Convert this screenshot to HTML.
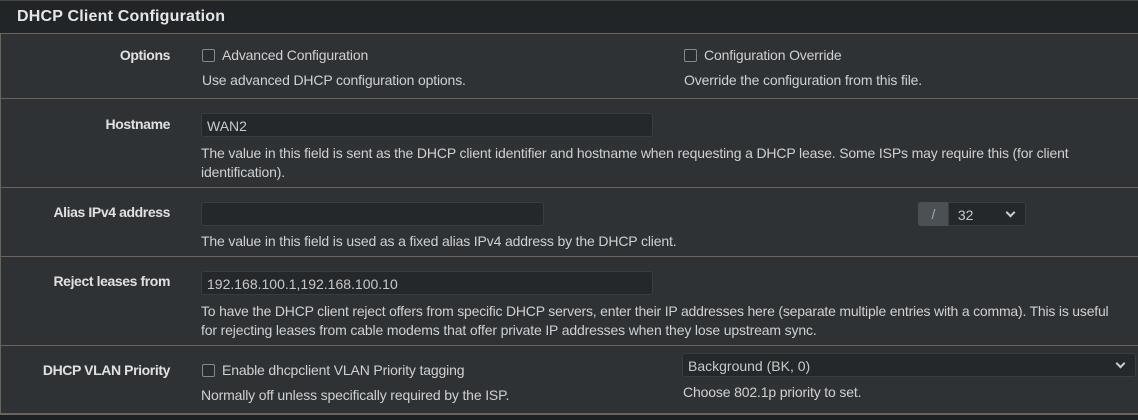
<!DOCTYPE html><html><head><style>
body{margin:0;width:1138px;height:420px;background:#1e2124;font-family:"Liberation Sans",sans-serif;font-size:14px;color:#d0d0d0;overflow:hidden;position:relative}
.p{position:absolute;left:0;top:0;width:1138px;height:414px;background:#2f3235;border-left:1px solid #6b6359}
.hd{position:absolute;left:0;top:0;width:1138px;height:32px;background:#222528;border-bottom:1px solid #6b6359;border-top:1px solid #4a463f}
.hd span{position:absolute;left:17px;top:7px;font-size:16px;font-weight:bold;color:#e6e6e6;letter-spacing:.2px}
.ln{position:absolute;left:0;width:1138px;height:1px;background:#6b6359}
.t{position:absolute;white-space:nowrap;letter-spacing:-0.15px}
.l{position:absolute;right:968px;font-weight:bold;color:#e0e0e0;white-space:nowrap;letter-spacing:-0.4px}
.in{position:absolute;background:#25282b;border:1px solid #3a3d40;border-radius:3px;box-sizing:border-box;color:#c8c8c8;padding:4px 5px}
.cb{position:absolute;width:11px;height:11px;border:1px solid #888;border-radius:2px;background:#2a2d30}
.ch{position:absolute;right:11px;top:6px;width:5px;height:5px;border-right:2px solid #ccc;border-bottom:2px solid #ccc;transform:rotate(45deg)}
</style></head><body>
<div class="p"></div>
<div class="hd"><span>DHCP Client Configuration</span></div>
<div class="ln" style="top:98px"></div>
<div class="ln" style="top:187px"></div>
<div class="ln" style="top:256px"></div>
<div class="ln" style="top:345px"></div>
<div class="ln" style="top:413px;height:2px"></div>

<div class="l" style="top:47px">Options</div>
<div class="cb" style="left:202px;top:49px"></div><div class="t" style="left:222px;top:47px">Advanced Configuration</div>
<div class="t" style="left:202px;top:72px">Use advanced DHCP configuration options.</div>
<div class="cb" style="left:684px;top:49px"></div><div class="t" style="left:704px;top:47px">Configuration Override</div>
<div class="t" style="left:684px;top:72px">Override the configuration from this file.</div>

<div class="l" style="top:116px">Hostname</div>
<div class="in" style="left:201px;top:113px;width:452px;height:24px">WAN2</div>
<div class="t" style="left:201px;top:145px">The value in this field is sent as the DHCP client identifier and hostname when requesting a DHCP lease. Some ISPs may require this (for client</div>
<div class="t" style="left:201px;top:164px">identification).</div>

<div class="l" style="top:204px">Alias IPv4 address</div>
<div class="in" style="left:201px;top:202px;width:343px;height:24px"></div>
<div style="position:absolute;left:918px;top:202px;width:31px;height:24px;background:#4b5054;color:#aaa;text-align:center;line-height:24px;border-radius:3px 0 0 3px">/</div>
<div class="in" style="left:948px;top:202px;width:78px;height:24px;border-radius:0 3px 3px 0">&nbsp;32<div class="ch"></div></div>
<div class="t" style="left:201px;top:233px">The value in this field is used as a fixed alias IPv4 address by the DHCP client.</div>

<div class="l" style="top:273px">Reject leases from</div>
<div class="in" style="left:201px;top:271px;width:452px;height:24px">192.168.100.1,192.168.100.10</div>
<div class="t" style="left:201px;top:303px;letter-spacing:-0.2px">To have the DHCP client reject offers from specific DHCP servers, enter their IP addresses here (separate multiple entries with a comma). This is useful</div>
<div class="t" style="left:201px;top:322px">for rejecting leases from cable modems that offer private IP addresses when they lose upstream sync.</div>

<div class="l" style="top:362px">DHCP VLAN Priority</div>
<div class="cb" style="left:202px;top:364px"></div><div class="t" style="left:222px;top:362px">Enable dhcpclient VLAN Priority tagging</div>
<div class="t" style="left:201px;top:387px">Normally off unless specifically required by the ISP.</div>
<div class="in" style="left:682px;top:353px;width:454px;height:24px">Background (BK, 0)<div class="ch"></div></div>
<div class="t" style="left:683px;top:384px">Choose 802.1p priority to set.</div>
</body></html>
